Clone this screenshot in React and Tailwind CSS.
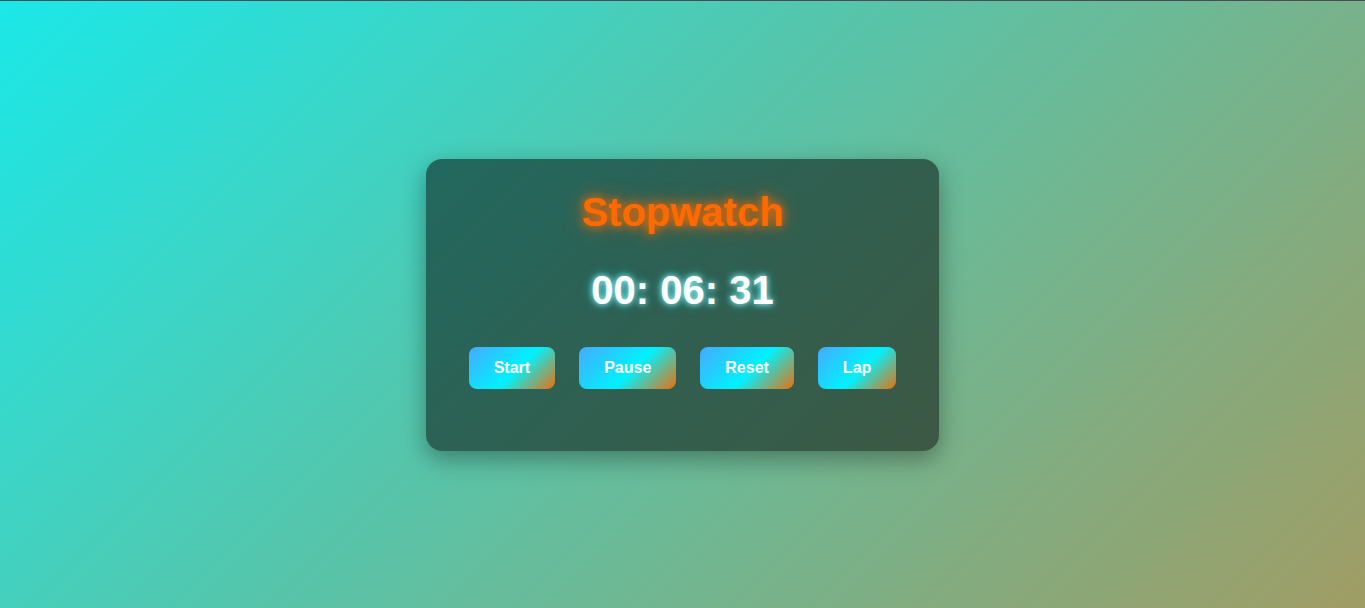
const BUTTONS = ['Start', 'Pause', 'Reset', 'Lap'];

export default function App() {
  return (
    <div className="min-h-screen w-full border-t border-[#4a4d55] bg-[linear-gradient(135deg,#1be8e8_0%,#5fc0a2_50%,#a09c64_100%)] flex items-center justify-center font-['Liberation_Sans',Arial,sans-serif]">
      <div className="w-[513px] rounded-2xl bg-black/50 pt-[30px] pb-[62px] flex flex-col items-center shadow-[0_8px_24px_rgba(0,0,0,0.35)]">
        <h1 className="text-[40px] leading-[46px] font-bold text-[#ff6a00] [text-shadow:0_0_10px_#ff6a00,0_0_20px_rgba(255,106,0,0.7)]">
          Stopwatch
        </h1>
        <div className="mt-[32px] text-[40px] leading-[46px] font-bold text-white [text-shadow:0_0_6px_#aff,0_0_12px_rgba(0,240,255,0.5)]">
          00: 06: 31
        </div>
        <div className="mt-[34px] flex gap-6">
          {BUTTONS.map((b) => (
            <button
              key={b}
              className="h-[42px] px-[25px] rounded-lg text-white font-bold text-base bg-[linear-gradient(135deg,#45aaff_0%,#00f2ff_55%,#ec6f0c_100%)]"
            >
              {b}
            </button>
          ))}
        </div>
      </div>
    </div>
  );
}
